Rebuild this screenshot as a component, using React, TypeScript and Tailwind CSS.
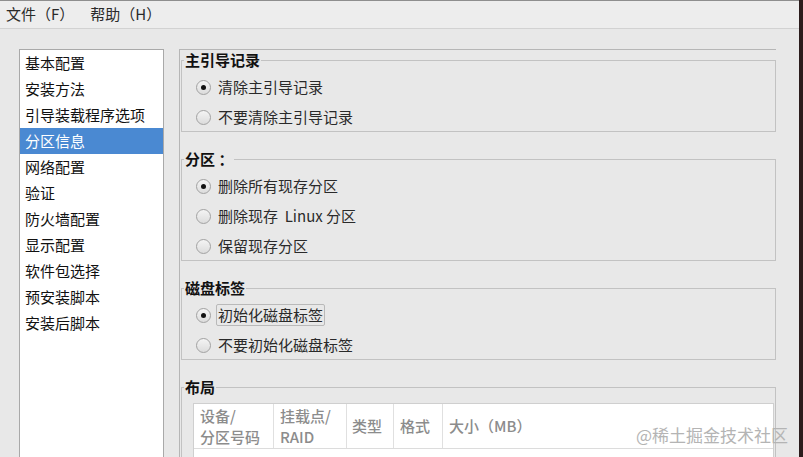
import React from 'react';

const navItems = [
  '基本配置',
  '安装方法',
  '引导装载程序选项',
  '分区信息',
  '网络配置',
  '验证',
  '防火墙配置',
  '显示配置',
  '软件包选择',
  '预安装脚本',
  '安装后脚本',
];

const cjk = { fontFamily: '"Noto Sans CJK SC", "Noto Sans", sans-serif' };

const Radio: React.FC<{ checked?: boolean; label: string; focused?: boolean }> = ({ checked, label, focused }) => (
  <div className="flex h-[28px] items-center">
    <span className="flex h-[15px] w-[15px] items-center justify-center rounded-full border border-[#a2a2a2] bg-gradient-to-b from-[#f4f4f4] to-[#dcdcdc]">
      {checked && <span className="h-[5px] w-[5px] rounded-full bg-[#111]" />}
    </span>
    <span
      className={
        focused
          ? 'ml-[5px] rounded-[2px] border border-[#b9b9b9] px-[1px] leading-[20px] text-[#2a2a2a]'
          : 'ml-[7px] leading-[20px] text-[#2a2a2a]'
      }
    >
      {label}
    </span>
  </div>
);

const Group: React.FC<{ title: string; className?: string; children: React.ReactNode }> = ({ title, className, children }) => (
  <fieldset className={'border border-[#c2c2c2] ' + (className ?? '')}>
    <legend className="ml-[2px] px-[1px] text-[15px] font-bold leading-[20px] text-[#111]">{title}</legend>
    {children}
  </fieldset>
);

export default function App() {
  return (
    <div className="flex h-[457px] w-[803px] overflow-hidden bg-[#e8e8e8] text-[15px]" style={cjk}>
      <div className="flex flex-1 flex-col border-t border-[#8e8e8e]">
        {/* menu bar */}
        <div className="flex h-[28px] shrink-0 items-center border-b border-[#d2d2d2] bg-[#ededed] pl-[6px] text-[#2a2a2a]">
          <span>文件（F）</span>
          <span className="ml-[16px]">帮助（H）</span>
        </div>

        <div className="flex flex-1 pl-[19px] pt-[20px]">
          {/* left nav */}
          <div className="w-[145px] border border-b-0 border-[#a9a9a9] bg-white">
            {navItems.map((item) => (
              <div
                key={item}
                className={
                  item === '分区信息'
                    ? 'flex h-[26px] items-center bg-[#4a89d2] pl-[5px] text-white'
                    : 'flex h-[26px] items-center pl-[5px] text-[#111]'
                }
              >
                {item}
              </div>
            ))}
          </div>

          {/* right content */}
          <div className="ml-[15px] w-[597px] border-l border-t border-[#b6b6b6] pl-[1px]">
            <Group title="主引导记录">
              <div className="flex flex-col gap-[2px] pl-[14px] pt-[3px]">
                <Radio checked label="清除主引导记录" />
                <Radio label="不要清除主引导记录" />
              </div>
            </Group>

            <Group title="分区 ：" className="mt-[17px]">
              <div className="flex flex-col gap-[2px] pl-[14px] pt-[3px]">
                <Radio checked label="删除所有现存分区" />
                <Radio label={'删除现存\u00a0 Linux 分区'} />
                <Radio label="保留现存分区" />
              </div>
            </Group>

            <Group title="磁盘标签" className="mt-[17px]">
              <div className="flex flex-col gap-[2px] pl-[14px] pt-[3px]">
                <Radio checked focused label="初始化磁盘标签" />
                <Radio label="不要初始化磁盘标签" />
              </div>
            </Group>

            <Group title="布局" className="mt-[17px] border-b-0">
              <div className="relative ml-[11px] mr-[1px] mt-[6px] h-[80px] border border-b-0 border-[#cfcfcf] bg-white">
                <div className="flex h-[45px] border-b border-[#dcdcdc] text-[15px] font-medium text-[#8c8c8c]">
                  <div className="flex w-[80px] flex-col justify-center border-r border-[#e0e0e0] pl-[6px] leading-[21px]">
                    <span>设备/</span>
                    <span>分区号码</span>
                  </div>
                  <div className="flex w-[73px] flex-col justify-center border-r border-[#e0e0e0] pl-[6px] leading-[21px]">
                    <span>挂载点/</span>
                    <span>RAID</span>
                  </div>
                  <div className="flex w-[47px] items-center border-r border-[#e0e0e0] pl-[5px]">类型</div>
                  <div className="flex w-[49px] items-center border-r border-[#e0e0e0] pl-[6px]">格式</div>
                  <div className="flex flex-1 items-center pl-[6px]">大小（MB）</div>
                </div>
                <span className="absolute right-[-15px] top-[18px] text-[17px] text-[#b4b4b4]">@稀土掘金技术社区</span>
              </div>
            </Group>
          </div>
        </div>
      </div>
      <div className="w-[4px] bg-[#2b1c1c]" />
    </div>
  );
}
